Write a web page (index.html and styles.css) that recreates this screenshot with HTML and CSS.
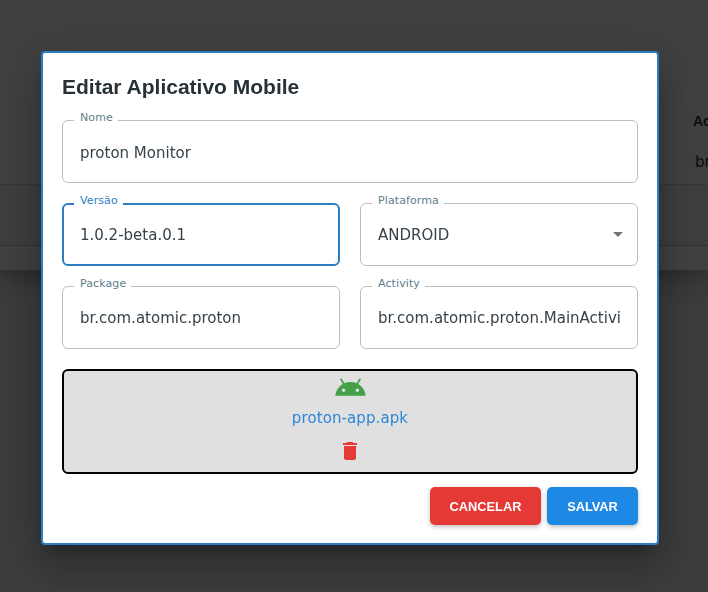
FILE: index.html
```html
<!DOCTYPE html>
<html lang="en">
<head>
    <meta charset="UTF-8">
    <meta name="viewport" content="width=device-width, initial-scale=1.0">
    <title>Editar Aplicativo Mobile</title>
    <link rel="stylesheet" href="styles.css">
</head>
<body>
    <!-- Page behind the dialog -->
    <div class="page-card">
        <div class="table-head"><span>Activity</span></div>
        <div class="table-row"><span>br.com.atomic.proton.MainActivity</span></div>
        <div class="table-footer"></div>
    </div>
    <div class="backdrop"></div>

    <div class="overlay">
        <div class="modal">
            <h2 class="modal-title">Editar Aplicativo Mobile</h2>

            <div class="field field-name">
                <span class="field-label">Nome</span>
                <div class="field-value">proton Monitor</div>
            </div>

            <div class="field-row">
                <div class="field field-focused">
                    <span class="field-label">Versão</span>
                    <div class="field-value">1.0.2-beta.0.1</div>
                </div>
                <div class="field">
                    <span class="field-label">Plataforma</span>
                    <div class="field-value">ANDROID</div>
                    <span class="select-arrow"></span>
                </div>
            </div>

            <div class="field-row">
                <div class="field">
                    <span class="field-label">Package</span>
                    <div class="field-value">br.com.atomic.proton</div>
                </div>
                <div class="field">
                    <span class="field-label">Activity</span>
                    <div class="field-value">br.com.atomic.proton.MainActivi</div>
                </div>
            </div>

            <div class="dropzone">
                <svg class="icon-android" viewBox="0 0 24 24"><path d="M17.6 9.48l1.84-3.18c.16-.31.04-.69-.26-.85-.29-.15-.65-.06-.83.22l-1.88 3.24c-2.86-1.21-6.08-1.21-8.94 0L5.65 5.67c-.19-.29-.58-.38-.87-.2-.28.18-.37.54-.22.83L6.4 9.48C3.3 11.25 1.28 14.44 1 18h22c-.28-3.56-2.3-6.75-5.4-8.52zM7 15.25c-.69 0-1.25-.56-1.25-1.25s.56-1.25 1.25-1.25 1.25.56 1.25 1.25-.56 1.25-1.25 1.25zm10 0c-.69 0-1.25-.56-1.25-1.25s.56-1.25 1.25-1.25 1.25.56 1.25 1.25-.56 1.25-1.25 1.25z"/></svg>
                <div class="file-name">proton-app.apk</div>
                <div class="icon-button">
                    <svg class="icon-delete" viewBox="0 0 24 24"><path d="M6 19c0 1.1.9 2 2 2h8c1.1 0 2-.9 2-2V7H6v12zM19 4h-3.5l-1-1h-5l-1 1H5v2h14V4z"/></svg>
                </div>
            </div>

            <div class="actions">
                <button class="btn btn-cancel">CANCELAR</button>
                <button class="btn btn-save">SALVAR</button>
            </div>
        </div>
    </div>
</body>
</html>
```

FILE: styles.css
```css
/* General styling */
html, body {
    height: 100%;
}
body {
    margin: 0;
    overflow: hidden;
    background-color: #eceeee;
    font-family: "DejaVu Sans", sans-serif;
    color: #333;
}

/* Page behind the dialog */
.page-card {
    height: 270px;
    box-sizing: border-box;
    padding-top: 100px;
    background-color: #fff;
    box-shadow: 0 4px 30px rgba(0, 0, 0, 0.45);
    white-space: nowrap;
    overflow: hidden;
}
.table-head {
    height: 41px;
    line-height: 42px;
    padding-left: 693px;
    font-family: "Liberation Sans", sans-serif;
    font-size: 14px;
    font-weight: bold;
}
.table-row {
    height: 43px;
    line-height: 42px;
    padding-left: 695px;
    font-size: 15px;
    border-bottom: 1px solid #d8d8d8;
}
.table-footer {
    height: 60px;
    background-color: #f3f5f5;
    border-bottom: 1px solid #c4c4c4;
}
.backdrop {
    position: fixed;
    inset: 0;
    background-color: rgba(0, 0, 0, 0.75);
}

/* Dialog */
.overlay {
    position: fixed;
    inset: 0;
    display: flex;
    align-items: flex-start;
    padding: 51px 0 0 41px;
}
.modal {
    width: 618px;
    box-sizing: border-box;
    padding: 19px 19px 18px;
    background-color: #fff;
    border: 2px solid #2d7dc4;
    border-radius: 4px;
    box-shadow: 0 11px 15px -7px rgba(0, 0, 0, 0.3), 0 24px 38px 3px rgba(0, 0, 0, 0.16), 0 9px 46px 8px rgba(0, 0, 0, 0.14);
}
.modal-title {
    margin: 0 0 20px;
    height: 28px;
    line-height: 30px;
    font-family: "Liberation Sans", sans-serif;
    font-size: 21px;
    font-weight: bold;
    color: #263238;
}

/* Outlined fields */
.field {
    position: relative;
    flex: 1;
    min-width: 0;
    height: 63px;
    box-sizing: border-box;
    border: 1px solid #bdbdbd;
    border-radius: 6px;
    display: flex;
    align-items: center;
    padding: 0 16px 0 17px;
    margin-bottom: 20px;
}
.field-name {
    padding-top: 2px;
}
.field-row {
    display: flex;
    gap: 20px;
}
.field-label {
    position: absolute;
    top: -10px;
    left: 11px;
    padding: 0 5px 0 6px;
    background-color: #fff;
    font-size: 11px;
    line-height: 14px;
    letter-spacing: 0.1px;
    color: #607d8b;
}
.field-value {
    overflow: hidden;
    white-space: nowrap;
    font-size: 15px;
    color: #37424a;
}
.field-focused {
    border: 2px solid #2d7dc4;
    padding: 0 15px 0 16px;
}
.field-focused .field-label {
    top: -11px;
    left: 10px;
    color: #2d7dc4;
}
.select-arrow {
    position: absolute;
    right: 14px;
    top: 28px;
    border-left: 5px solid transparent;
    border-right: 5px solid transparent;
    border-top: 5px solid #757575;
}

/* File box */
.dropzone {
    height: 105px;
    box-sizing: border-box;
    border: 2px solid #000;
    border-radius: 6px;
    background-color: #e0e0e0;
    display: flex;
    flex-direction: column;
    align-items: center;
    margin-bottom: 13px;
}
.icon-android {
    width: 33px;
    height: 33px;
    flex: none;
    fill: #43a047;
}
.file-name {
    height: 27px;
    line-height: 28px;
    font-size: 15px;
    letter-spacing: 0.1px;
    color: #2d86d8;
}
.icon-button {
    padding: 8px;
    line-height: 0;
}
.icon-delete {
    width: 24px;
    height: 24px;
    fill: #e53935;
}

/* Buttons */
.actions {
    display: flex;
    justify-content: flex-end;
    gap: 6px;
}
.btn {
    height: 38px;
    width: 111px;
    padding: 0;
    border: none;
    border-radius: 5px;
    font-family: "Liberation Sans", sans-serif;
    font-size: 12.8px;
    font-weight: bold;
    color: #fff;
    box-shadow: 0 2px 4px rgba(0, 0, 0, 0.25);
}
.btn-cancel {
    background-color: #e53935;
}
.btn-save {
    width: 91px;
    background-color: #1e88e5;
}
```
